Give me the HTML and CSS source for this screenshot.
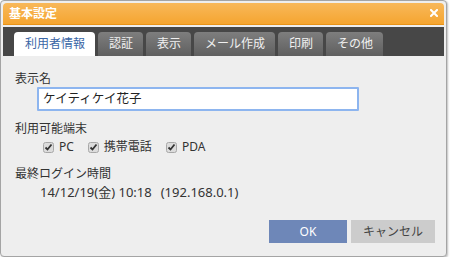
FILE: index.html
```html
<!DOCTYPE html>
<html lang="ja">
<head>
<meta charset="utf-8">
<title>基本設定</title>
<link rel="stylesheet" href="styles.css">
</head>
<body>
<div class="dialog">
  <div class="titlebar">
    <span class="title">基本設定</span>
    <svg class="close" width="8" height="8" viewBox="0 0 8 8"><path d="M1 1L7 7M7 1L1 7" stroke="#fff" stroke-width="2" stroke-linecap="square"/></svg>
  </div>
  <div class="tabbar">
    <div class="tab active">利用者情報</div>
    <div class="tab">認証</div>
    <div class="tab">表示</div>
    <div class="tab">メール作成</div>
    <div class="tab">印刷</div>
    <div class="tab">その他</div>
  </div>
  <div class="content">
    <div class="label">表示名</div>
    <div class="input">ケイティケイ花子</div>
    <div class="label gap">利用可能端末</div>
    <div class="checks">
      <span class="check"><svg class="cb" width="11" height="11" viewBox="0 0 11 11"><rect x="0.5" y="0.5" width="10" height="10" rx="2" fill="#dcdcdc" stroke="#a8a8a8"/><path d="M2.5 5.5L4.5 7.5L8.5 2.5" fill="none" stroke="#333" stroke-width="1.8"/></svg>PC</span>
      <span class="check"><svg class="cb" width="11" height="11" viewBox="0 0 11 11"><rect x="0.5" y="0.5" width="10" height="10" rx="2" fill="#dcdcdc" stroke="#a8a8a8"/><path d="M2.5 5.5L4.5 7.5L8.5 2.5" fill="none" stroke="#333" stroke-width="1.8"/></svg>携帯電話</span>
      <span class="check"><svg class="cb" width="11" height="11" viewBox="0 0 11 11"><rect x="0.5" y="0.5" width="10" height="10" rx="2" fill="#dcdcdc" stroke="#a8a8a8"/><path d="M2.5 5.5L4.5 7.5L8.5 2.5" fill="none" stroke="#333" stroke-width="1.8"/></svg>PDA</span>
    </div>
    <div class="label gap2">最終ログイン時間</div>
    <div class="value">14/12/19(金) 10:18<span class="ip">(192.168.0.1)</span></div>
    <div class="buttons">
      <div class="btn ok">OK</div>
      <div class="btn cancel">キャンセル</div>
    </div>
  </div>
</div>
</body>
</html>
```
FILE: styles.css
```css
html, body {
  margin: 0;
  padding: 0;
  background: #ffffff;
}
body {
  font-family: "Noto Sans", "Noto Sans CJK JP", sans-serif;
  font-size: 12px;
  color: #333333;
}
.dialog {
  box-sizing: border-box;
  width: 447px;
  height: 257px;
  border: 1px solid #a4a4a4;
  border-radius: 4px;
  background: #eeeeee;
  padding: 2px 2px 0 2px;
  box-shadow: 1px 1px 2px rgba(0,0,0,0.25);
  display: flex;
  flex-direction: column;
}
.titlebar {
  height: 22px;
  box-sizing: border-box;
  background: linear-gradient(#f8b85a, #f5a530);
  border-bottom: 1px solid #e89318;
  border-radius: 4px 4px 0 0;
  display: flex;
  align-items: center;
  justify-content: space-between;
  padding: 0 6px 0 6px;
}
.title {
  color: #ffffff;
  font-weight: bold;
  font-size: 12px;
  line-height: 16px;
}
.close {
  display: block;
  margin-top: -1px;
}
.tabbar {
  margin-top: 2px;
  height: 29px;
  box-sizing: border-box;
  background: #474747;
  display: flex;
  align-items: flex-end;
  gap: 3px;
  padding: 0 0 0 11px;
}
.tab {
  height: 24px;
  box-sizing: border-box;
  padding: 0 10px 0 11px;
  line-height: 24px;
  border-radius: 4px 4px 0 0;
  background: linear-gradient(#7e7e7e, #5f5f5f);
  color: #f0f0f0;
  font-size: 12px;
  white-space: nowrap;
}
.tab.active {
  background: #ffffff;
  color: #3a66a6;
}
.content {
  padding: 15px 9px 0 12px;
  display: flex;
  flex-direction: column;
  align-items: flex-start;
}
.label {
  line-height: 16px;
}
.label.gap {
  margin-top: 10px;
}
.label.gap2 {
  margin-top: 11px;
}
.input {
  margin-left: 22px;
  width: 322px;
  height: 24px;
  box-sizing: border-box;
  border: 2px solid #8db5ef;
  border-radius: 1px;
  background: #ffffff;
  padding: 0 4px;
  line-height: 20px;
  font-size: 12.5px;
  color: #222222;
}
.checks {
  margin-top: 2px;
  margin-left: 28px;
  display: flex;
  gap: 14px;
  line-height: 16px;
}
.check {
  display: flex;
  align-items: center;
  gap: 5px;
}
.cb {
  display: block;
}
.value {
  margin-top: 2px;
  margin-left: 25px;
  line-height: 16px;
  font-size: 13px;
}
.ip {
  margin-left: 9px;
}
.buttons {
  margin-top: 20px;
  align-self: stretch;
  display: flex;
  justify-content: flex-end;
  gap: 4px;
}
.btn {
  height: 23px;
  line-height: 23px;
  text-align: center;
  font-size: 12px;
}
.ok {
  width: 78px;
  background: #6e87b8;
  color: #ffffff;
}
.cancel {
  width: 84px;
  background: #cccccc;
  color: #444444;
}
```
